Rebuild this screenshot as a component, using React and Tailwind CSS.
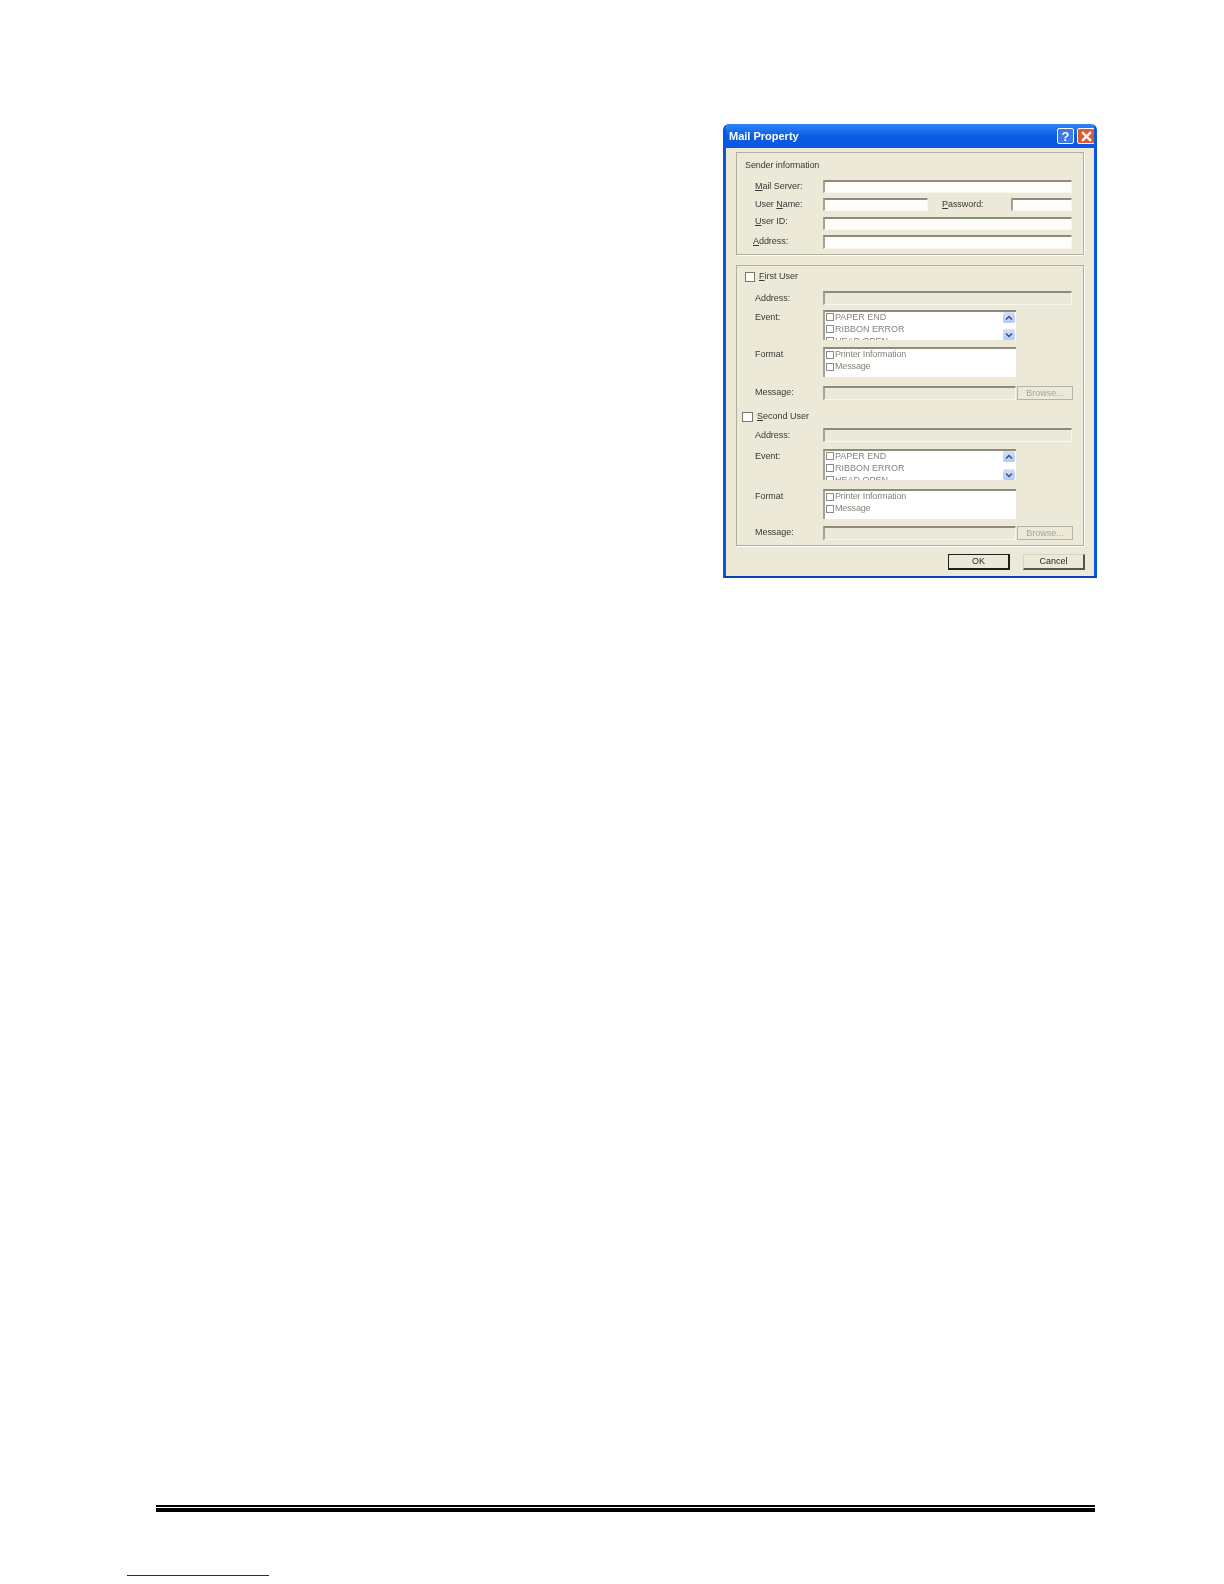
const font = { fontFamily: '"Liberation Sans", Arial, sans-serif' }

function Field({ className = '', disabled = false }) {
  return (
    <div
      className={`border-t-2 border-l-2 border-r border-b border-t-[#8c8b7c] border-l-[#a3a294] border-r-[#f7f6ef] border-b-[#f7f6ef] ${disabled ? 'bg-[#ebe9da]' : 'bg-[#fdfdfa]'} ${className}`}
    />
  )
}

function Row({ label, className = '', labelClass = 'pl-[18px] items-center', children }) {
  return (
    <div className={`flex ${className}`}>
      <div className={`w-[86px] shrink-0 flex text-[9px] tracking-[-0.05px] text-[#3a3a36] ${labelClass}`}>{label}</div>
      {children}
    </div>
  )
}

function Check() {
  return <span className="w-[8px] h-[8px] shrink-0 border border-[#8c8c84] bg-white" />
}

function Arrow({ up }) {
  return (
    <div className="h-[11px] rounded-[2px] bg-gradient-to-b from-[#d5e0f8] to-[#b4c8f2] flex items-center justify-center">
      <svg width="8" height="6" viewBox="0 0 8 6" fill="none" stroke="#3a4f8c" strokeWidth="1.5">
        <path d={up ? 'M1 4.5 L4 1.5 L7 4.5' : 'M1 1.5 L4 4.5 L7 1.5'} />
      </svg>
    </div>
  )
}

function EventList() {
  return (
    <div className="relative w-[193px] border-t-2 border-l-2 border-t-[#8c8b7c] border-l-[#a3a294] bg-white overflow-hidden pl-[1px]">
      <div className="-mt-[1px] text-[9px] leading-[12px] text-[#85857d]">
        {['PAPER END', 'RIBBON ERROR', 'HEAD OPEN'].map((t) => (
          <div key={t} className="flex items-center gap-[1px] h-[12px]">
            <Check />
            <span>{t}</span>
          </div>
        ))}
      </div>
      <div className="absolute right-[1px] top-0 bottom-0 w-[12px] flex flex-col justify-between">
        <Arrow up />
        <Arrow />
      </div>
    </div>
  )
}

function FormatList() {
  return (
    <div className="w-[193px] border-t-2 border-l-2 border-t-[#8c8b7c] border-l-[#a3a294] bg-white pl-[1px] text-[9px] tracking-[-0.15px] text-[#85857d]">
      {['Printer Information', 'Message'].map((t) => (
        <div key={t} className="flex items-center gap-[1px] h-[12px]">
          <Check />
          <span>{t}</span>
        </div>
      ))}
    </div>
  )
}

const topLabel = 'pl-[18px] items-start leading-[14px]'

function UserRows({ rowClass, addressLabel }) {
  return (
    <>
      <Row label="Address:" labelClass={addressLabel} className={`h-[14px] ${rowClass.address}`}>
        <Field disabled className="w-[249px]" />
      </Row>
      <Row label="Event:" labelClass={topLabel} className={rowClass.event}>
        <EventList />
      </Row>
      <Row label="Format" labelClass={topLabel} className={rowClass.format}>
        <FormatList />
      </Row>
      <Row label="Message:" className={`h-[14px] ${rowClass.message}`}>
        <Field disabled className="w-[193px]" />
        <button
          type="button"
          className="ml-[1px] w-[56px] h-[14px] border border-[#b5b4a6] text-[9px] text-[#a5a498] bg-[#ece9d8] leading-none"
        >
          Browse...
        </button>
      </Row>
    </>
  )
}

export default function App() {
  return (
    <div className="w-[1224px] h-[1584px] bg-white flex flex-col" style={font}>
      <div className="ml-[723px] mt-[124px] w-[374px] h-[454px] flex flex-col rounded-t-[6px] overflow-hidden border-x-[3px] border-b-[2px] border-x-[#0a56e2] border-b-[#0b3db5] bg-[#ece9d8] blur-[0.3px]">
        <div className="h-[24px] -mx-[3px] shrink-0 flex items-center pl-[6px] pr-[2px] bg-gradient-to-b from-[#2f86f5] via-[#0a5ce6] to-[#0858e0]">
          <span className="text-[11px] font-bold text-white">Mail Property</span>
          <div className="ml-auto flex gap-[3px]">
            <div className="w-[17px] h-[16px] rounded-[2px] border border-white bg-[#3f78e8] flex items-center justify-center text-[13px] leading-none font-bold text-white">
              ?
            </div>
            <div className="w-[18px] h-[16px] rounded-[2px] border border-white bg-[#dd5a34] flex items-center justify-center">
              <svg width="11" height="11" viewBox="0 0 10 10" fill="none" stroke="#fff" strokeWidth="2">
                <path d="M1 1 L9 9 M9 1 L1 9" />
              </svg>
            </div>
          </div>
        </div>

        <div className="ml-[10px] mt-[4px] w-[348px] h-[103px] shrink-0 flex flex-col border border-[#b0ae9c] shadow-[1px_1px_0_#fff]">
          <div className="ml-[8px] mt-[6px] h-[14px] flex items-center text-[9px] tracking-[-0.1px] text-[#3a3a36]">Sender information</div>
          <Row label={<span><u>M</u>ail Server:</span>} className="mt-[7px] h-[13px]">
            <Field className="w-[249px]" />
          </Row>
          <Row label={<span>User <u>N</u>ame:</span>} className="mt-[5px] h-[13px]">
            <Field className="w-[105px]" />
            <div className="ml-[14px] w-[69px] flex items-center text-[9px] tracking-[-0.05px] text-[#3a3a36]">
              <span><u>P</u>assword:</span>
            </div>
            <Field className="w-[61px]" />
          </Row>
          <Row label={<span><u>U</u>ser ID:</span>} labelClass="pl-[18px] items-center pb-[3px]" className="mt-[6px] h-[13px]">
            <Field className="w-[249px]" />
          </Row>
          <Row label={<span><u>A</u>ddress:</span>} labelClass="pl-[16px] items-center" className="mt-[5px] h-[14px]">
            <Field className="w-[249px]" />
          </Row>
        </div>

        <div className="ml-[10px] mt-[10px] w-[348px] h-[281px] shrink-0 flex flex-col border border-[#b0ae9c] shadow-[1px_1px_0_#fff]">
          <div className="ml-[8px] mt-[6px] h-[10px] flex items-center text-[9px] text-[#3a3a36]">
            <span className="w-[10px] h-[10px] border border-[#77776c] bg-white" />
            <span className="ml-[4px]"><u>F</u>irst User</span>
          </div>
          <UserRows
            addressLabel="pl-[18px] items-center pt-[2px]"
            rowClass={{
              address: 'mt-[9px]',
              event: 'mt-[5px] h-[30px]',
              format: 'mt-[7px] h-[30px]',
              message: 'mt-[9px]',
            }}
          />
          <div className="ml-[5px] mt-[12px] h-[10px] flex items-center text-[9px] text-[#3a3a36]">
            <span className="w-[11px] h-[10px] border border-[#77776c] bg-white" />
            <span className="ml-[4px]"><u>S</u>econd User</span>
          </div>
          <UserRows
            addressLabel="pl-[18px] items-center pt-[2px]"
            rowClass={{
              address: 'mt-[6px]',
              event: 'mt-[7px] h-[31px]',
              format: 'mt-[9px] h-[30px]',
              message: 'mt-[7px]',
            }}
          />
        </div>

        <div className="mt-[8px] ml-[222px] flex gap-[13px] text-[9px] text-[#2a2a28]">
          <button type="button" className="w-[62px] h-[16px] border border-[#1f1f1c] border-b-2 border-r-2 bg-[#ece9d8] leading-none">
            OK
          </button>
          <button type="button" className="w-[62px] h-[16px] border border-[#d6d4c6] border-b-[#55554c] border-r-[#55554c] border-b-2 border-r-2 bg-[#ece9d8] leading-none">
            Cancel
          </button>
        </div>
      </div>

      <div className="ml-[156px] mt-[927px] w-[939px] h-[2px] bg-black" />
      <div className="ml-[156px] mt-[1px] w-[939px] h-[4px] bg-black" />

      <div className="ml-[127px] mt-[63px] w-[142px] h-[1px] bg-[#1f1f9a]" />
    </div>
  )
}
